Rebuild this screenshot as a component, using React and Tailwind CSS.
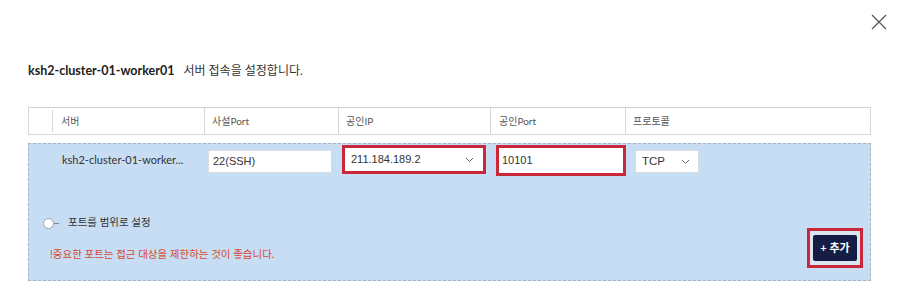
import React from "react";

const KR = { fontFamily: "Lato, 'Noto Sans CJK KR', sans-serif" };
const AR = { fontFamily: "'Liberation Sans', Arial, 'Noto Sans CJK KR', sans-serif" };

function Chevron() {
  return (
    <svg width="9" height="6" viewBox="0 0 9 6" className="shrink-0">
      <path d="M1 1 L4.5 4.5 L8 1" fill="none" stroke="#666" strokeWidth="1" />
    </svg>
  );
}

export default function App() {
  return (
    <div className="relative w-[900px] h-[303px] bg-white overflow-hidden" style={KR}>
      {/* close */}
      <button className="absolute left-[871px] top-[14px] w-[16px] h-[16px]">
        <svg width="16" height="16" viewBox="0 0 16 16">
          <path d="M1 1 L15 15 M15 1 L1 15" stroke="#555" strokeWidth="1.2" />
        </svg>
      </button>

      <div className="pl-[28px] pt-[62px] w-[871px]">
        <div className="flex items-baseline h-[18px]">
          <span className="text-[12.5px] font-bold text-[#222] leading-[18px]">ksh2-cluster-01-worker01</span>
          <span className="ml-[9px] text-[12px] text-[#333] leading-[18px]">서버 접속을 설정합니다.</span>
        </div>

        {/* header */}
        <div className="mt-[27px] flex h-[28px] border border-[#d6d6d6] border-t-[#cfcfcf] text-[10px] text-[#555]">
          <div className="w-[24px] border-r border-[#d6d6d6] my-[2px]" />
          <div className="w-[152px] border-r border-[#d6d6d6] pl-[8px] flex items-center">서버</div>
          <div className="w-[134px] border-r border-[#d6d6d6] pl-[7px] flex items-center">사설Port</div>
          <div className="w-[152px] border-r border-[#d6d6d6] pl-[7px] flex items-center">공인IP</div>
          <div className="w-[135px] border-r border-[#d6d6d6] pl-[8px] flex items-center">공인Port</div>
          <div className="flex-1 pl-[7px] flex items-center">프로토콜</div>
        </div>

        {/* blue area */}
        <div className="mt-[8px] h-[138px] bg-[#c7ddf3] border border-dashed border-[#aab4bf] flex flex-col">
          <div className="flex items-start pt-[1px] h-[34px]">
            <div className="w-[179px] pl-[33px] pt-[8px] text-[11px] text-[#333] leading-[14px]">ksh2-cluster-01-worker...</div>
            <div className="mt-[5px] w-[124px] h-[23px] bg-white border border-[#d8dde3] flex items-center pl-[4px] text-[11px] text-[#333]" style={AR}>22(SSH)</div>
            <div className="ml-[10px] w-[144px] h-[29px] border-[3px] border-[#c9283b] bg-white flex items-center justify-between pl-[6px] pr-[9px] text-[11px] text-[#333]" style={AR}>
              <span>211.184.189.2</span>
              <Chevron />
            </div>
            <div className="ml-[10px] w-[130px] h-[31px] border-[3px] border-[#c9283b] bg-white flex items-center pl-[3px] text-[11px] text-[#333]" style={AR}>10101</div>
            <div className="ml-[9px] mt-[5px] w-[64px] h-[23px] bg-white border border-[#d8dde3] flex items-center justify-between pl-[6px] pr-[8px] text-[11.5px] text-[#333]" style={AR}>
              <span>TCP</span>
              <Chevron />
            </div>
          </div>

          <div className="flex items-end justify-between pr-[7px] mt-[38px]">
            <div className="flex flex-col pb-[8px]">
              <div className="flex items-center pl-[14px] h-[14px]">
                <span className="w-[11px] h-[11px] rounded-full bg-white border border-[#9aa3ad]" />
                <span className="w-[5px] h-[1px] bg-[#888]" />
                <span className="ml-[9px] text-[10.5px] text-[#333]">포트를 범위로 설정</span>
              </div>
              <div className="mt-[17px] pl-[21px] text-[10.5px] text-[#d8492e] leading-[14px]">!중요한 포트는 접근 대상을 제한하는 것이 좋습니다.</div>
            </div>
            <div className="mb-[1px] border-[3px] border-[#c9283b] px-[3px] py-[4px] bg-[#dbe5f1]">
              <button className="w-[44px] h-[26px] bg-[#151d45] text-white text-[11px] font-bold rounded-[2px] flex items-center justify-center">+ 추가</button>
            </div>
          </div>
        </div>
      </div>
    </div>
  );
}
